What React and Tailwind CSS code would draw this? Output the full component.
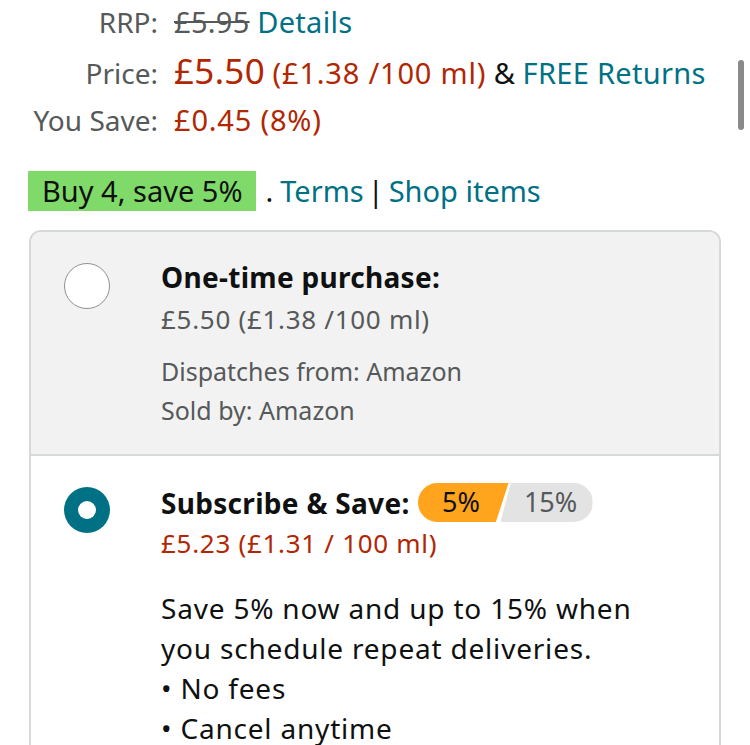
import React from 'react';

const FONT = { fontFamily: '"Noto Sans", "Open Sans", Arial, sans-serif' };

function PriceRow({ label, children, className = '' }) {
  return (
    <div className={`flex items-baseline ${className}`}>
      <div className="w-[158px] shrink-0 text-right text-[28px] text-[#565959]">{label}</div>
      <div className="pl-[16px] text-[29px] whitespace-nowrap">{children}</div>
    </div>
  );
}

function Radio({ checked }) {
  if (checked) {
    return (
      <div className="w-[46px] h-[46px] rounded-full bg-[#007185] flex items-center justify-center">
        <div className="w-[18px] h-[18px] rounded-full bg-white" />
      </div>
    );
  }
  return <div className="w-[46px] h-[46px] rounded-full border-[1.5px] border-[#8d9096] bg-white" />;
}

export default function App() {
  return (
    <div style={FONT} className="relative w-[750px] h-[745px] overflow-hidden bg-white text-[#0f1111]">
      <div className="absolute right-[6px] top-[60px] w-[6px] h-[70px] rounded-full bg-[#8a8a8a]" />

      <div className="flex flex-col">
        <PriceRow label="RRP:" className="leading-[44px]">
          <span className="line-through text-[#565959] tracking-[0.3px]">£5.95</span>{' '}
          <span className="text-[#007185] tracking-[0.3px]">Details</span>
        </PriceRow>
        <PriceRow label="Price:" className="leading-[54px]">
          <span className="text-[#b12704] text-[35px] tracking-[0.3px]">£5.50</span>{' '}
          <span className="text-[#b12704] tracking-[0.8px]">(£1.38 /100 ml)</span>{' '}
          <span>&amp;</span>{' '}
          <span className="text-[#007185] tracking-[0.3px]">FREE Returns</span>
        </PriceRow>
        <PriceRow label="You Save:" className="leading-[40px]">
          <span className="text-[#b12704] tracking-[0.8px]">£0.45 (8%)</span>
        </PriceRow>
      </div>

      <div className="flex items-center mt-[29px] ml-[28px] text-[29px]">
        <span className="bg-[#7fda6a] px-[14px] h-[40px] flex items-center leading-none">Buy 4, save 5%</span>
        <span className="ml-[9px]">.</span>
        <span className="ml-[7px] text-[#007185]">Terms</span>
        <span className="ml-[4px] mr-[5px]">|</span>
        <span className="text-[#007185]">Shop items</span>
      </div>

      <div className="mx-[29px] mt-[17px] rounded-t-[12px] border-2 border-b-0 border-[#d5d9d9] overflow-hidden">
        <div className="bg-[#f2f2f2] flex pt-[28px] pb-[25px] border-b-2 border-[#d5d9d9]">
          <div className="w-[130px] shrink-0 flex pl-[33px] pt-[3px]">
            <Radio checked={false} />
          </div>
          <div className="flex flex-col">
            <div className="text-[28px] font-bold leading-[34px] tracking-[0.3px]">One-time purchase:</div>
            <div className="mt-[4px] text-[26px] leading-[42px] text-[#565959] tracking-[0.7px]">£5.50 (£1.38 /100 ml)</div>
            <div className="mt-[11px] text-[25px] text-[#565959] leading-[40px]">Dispatches from: Amazon</div>
            <div className="text-[25px] text-[#565959] leading-[38px]">Sold by: Amazon</div>
          </div>
        </div>

        <div className="bg-white flex pt-[27px] pb-[20px]">
          <div className="w-[130px] shrink-0 flex pl-[33px] pt-[4px]">
            <Radio checked />
          </div>
          <div className="flex flex-col">
            <div className="flex items-center h-[40px]">
              <span className="text-[28px] font-bold tracking-[0.3px]">Subscribe &amp; Save:</span>
              <div className="ml-[8px] flex items-center h-[39px] text-[27px]">
                <span className="h-[39px] w-[91px] flex items-center justify-center pr-[4px] rounded-l-full bg-[#ffa41c] [clip-path:polygon(0_0,100%_0,86%_100%,0_100%)]">5%</span>
                <span className="-ml-[8px] h-[39px] w-[92px] flex items-center justify-center pl-[8px] rounded-r-full bg-[#e3e3e3] text-[#565959] [clip-path:polygon(11%_0,100%_0,100%_100%,0_100%)]">15%</span>
              </div>
            </div>
            <div className="text-[#b12704] text-[26px] leading-[40px] tracking-[0.7px]">£5.23 (£1.31 / 100 ml)</div>
            <div className="mt-[25px] text-[28px] leading-[40px] tracking-[0.8px] whitespace-nowrap">
              <div>Save 5% now and up to 15% when</div>
              <div>you schedule repeat deliveries.</div>
              <div>• No fees</div>
              <div>• Cancel anytime</div>
            </div>
          </div>
        </div>
      </div>
    </div>
  );
}
